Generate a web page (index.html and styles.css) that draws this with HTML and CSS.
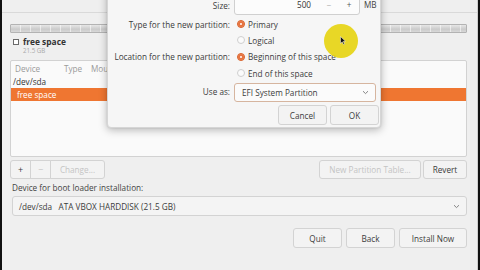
FILE: index.html
```html
<!DOCTYPE html>
<html>
<head>
<meta charset="utf-8">
<link rel="stylesheet" href="styles.css">
</head>
<body>
<div class="screen">
  <div class="window">
    <div class="topbar"></div>
    <div class="content">
      <div class="pbar"></div>
      <div class="legend">
        <span class="chk"></span>
        <div class="legend-text">
          <div class="legend-name">free space</div>
          <div class="legend-size">21.5 GB</div>
        </div>
      </div>
      <div class="listbox">
        <div class="lrow lhead">
          <span class="c-dev">Device</span><span class="c-type">Type</span><span class="c-mount">Mount point</span>
        </div>
        <div class="lrow"><span class="c-sda">/dev/sda</span></div>
        <div class="lrow lsel"><span class="c-free">free space</span></div>
      </div>
      <div class="toolbar">
        <div class="btn-group">
          <span class="btn tb-add">+</span><span class="btn tb-rm dis">−</span><span class="btn tb-change dis">Change...</span>
        </div>
        <div class="spacer"></div>
        <span class="btn tb-new dis">New Partition Table...</span>
        <span class="btn tb-revert">Revert</span>
      </div>
      <div class="boot-label">Device for boot loader installation:</div>
      <div class="combo boot-combo">
        <span class="combo-text">/dev/sda&nbsp;&nbsp;&nbsp;ATA VBOX HARDDISK (21.5 GB)</span>
        <svg class="chev" width="7" height="5" viewBox="0 0 7 5"><path d="M1 1.2 L3.5 3.6 L6 1.2" fill="none" stroke="#777" stroke-width="0.9"/></svg>
      </div>
      <div class="footer">
        <span class="btn fbtn f-quit">Quit</span>
        <span class="btn fbtn f-back">Back</span>
        <span class="btn fbtn f-install">Install Now</span>
      </div>
    </div>
  </div>

  <div class="dialog">
    <div class="dlabel">Size:</div>
    <div class="size-row">
      <div class="spin">
        <span class="spin-val">500</span>
        <span class="spin-btn minus">−</span>
        <span class="spin-btn plus">+</span>
      </div>
      <span class="unit">MB</span>
    </div>

    <div class="dlabel">Type for the new partition:</div>
    <div class="radio"><span class="rdot on"></span>Primary</div>
    <div class="dlabel"></div>
    <div class="radio"><span class="rdot"></span>Logical</div>

    <div class="dlabel">Location for the new partition:</div>
    <div class="radio"><span class="rdot on"></span>Beginning of this space</div>
    <div class="dlabel"></div>
    <div class="radio"><span class="rdot"></span>End of this space</div>

    <div class="dlabel">Use as:</div>
    <div class="combo use-combo">
      <span class="combo-text">EFI System Partition</span>
      <svg class="chev" width="7" height="5" viewBox="0 0 7 5"><path d="M1 1.2 L3.5 3.6 L6 1.2" fill="none" stroke="#777" stroke-width="0.9"/></svg>
    </div>

    <div class="dbuttons">
      <span class="btn dbtn">Cancel</span>
      <span class="btn dbtn">OK</span>
    </div>
  </div>

  <div class="highlight"></div>
  <svg class="cursor" width="6" height="9" viewBox="0 0 6 9"><path d="M0.5 0.5 L0.5 7.5 L2.2 5.9 L3.5 8.5 L4.6 8 L3.3 5.4 L5.5 5.3 Z" fill="#111" stroke="#fff" stroke-width="0.5"/></svg>
</div>
</body>
</html>
```
FILE: styles.css
```css
* { box-sizing: border-box; }
html, body { margin: 0; padding: 0; }
body {
  width: 480px; height: 270px; overflow: hidden;
  background: #111;
  font-family: "Open Sans", "Noto Sans", sans-serif;
  font-size: 8.2px;
  color: #3c3c3c;
}
.screen { position: relative; width: 480px; height: 270px; }
.window {
  margin-left: 2px; width: 476px; height: 270px;
  background: #efefef;
  border-right: 1px solid #cfcfcf;
}
.topbar {
  height: 13px;
  border-bottom: 1px solid #d9d9d9;
}
.content { padding: 11px 10px 0 8px; display: flex; flex-direction: column; }

.pbar {
  height: 9px;
  border: 1px solid #b3b3b3;
  border-radius: 1px;
  background:
    repeating-linear-gradient(90deg, transparent 0 9px, rgba(255,255,255,0.55) 9px 10px),
    linear-gradient(#e6e6e6, #cbcbcb 60%, #d8d8d8);
}
.legend { display: flex; align-items: flex-start; margin-top: 3px; height: 20px; }
.chk { width: 6px; height: 6px; border: 1px solid #6a6a6a; background: #fff; margin: 3px 4px 0 3px; flex: none; }
.legend-name { font-weight: bold; font-size: 8.4px; color: #333; line-height: 11px; }
.legend-size { font-size: 6.2px; color: #a9a9a9; line-height: 7px; }

.listbox {
  margin-top: 4px;
  height: 97px;
  border: 1px solid #d2d2d2;
  border-radius: 2px;
  background: #fafafa;
}
.lrow { height: 13px; display: flex; align-items: center; white-space: nowrap; }
.lhead { height: 14px; color: #9a9a9a; }
.c-dev { margin-left: 4px; width: 49px; }
.c-type { width: 27px; }
.c-sda { margin-left: 2px; color: #333; }
.lsel { background: #ef7631; color: #fff; }
.c-free { margin-left: 6px; }

.btn {
  display: inline-flex; align-items: center; justify-content: center;
  height: 19px;
  border: 1px solid #d3d3d3;
  border-radius: 3px;
  background: #f3f3f3;
  color: #3c3c3c;
  white-space: nowrap;
}
.dis { color: #c4c4c4; }
.toolbar { display: flex; margin-top: 3px; height: 19px; }
.btn-group { display: flex; }
.btn-group .btn { border-radius: 0; margin-left: -1px; }
.btn-group .btn:first-child { border-radius: 3px 0 0 3px; margin-left: 0; }
.btn-group .btn:last-child { border-radius: 0 3px 3px 0; }
.tb-add { width: 21px; font-size: 9px; }
.tb-rm { width: 21px; font-size: 9px; }
.tb-change { width: 55px; }
.spacer { flex: 1; }
.tb-new { width: 102px; margin-right: 2px; }
.tb-revert { width: 44px; }

.boot-label { margin-top: 3px; height: 12px; line-height: 12px; padding-left: 2px; color: #444; }
.combo {
  display: flex; align-items: center; justify-content: space-between;
  border: 1px solid #d3d3d3; border-radius: 3px; background: #f4f4f4;
}
.boot-combo { margin-top: 2px; height: 20px; margin-left: 2px; padding: 0 6px 0 6px; }
.combo-text { white-space: nowrap; color: #3c3c3c; }
.footer { display: flex; justify-content: flex-end; margin-top: 12px; gap: 4px; }
.fbtn { height: 20px; }
.f-quit { width: 49px; }
.f-back { width: 49px; }
.f-install { width: 68px; }

/* dialog */
.dialog {
  position: absolute; left: 107px; top: -14px;
  width: 274px; height: 142px;
  background: #f6f6f6;
  border: 1px solid #d6d6d6;
  border-radius: 0 0 4px 4px;
  box-shadow: 0 2px 8px rgba(0,0,0,0.28), 0 0 2px rgba(0,0,0,0.12);
  display: grid;
  grid-template-columns: 118px 1fr;
  column-gap: 4px;
  align-items: center;
  align-content: start;
  padding: 7px 1px 0 4px;
}
.dlabel { text-align: right; white-space: nowrap; color: #3c3c3c; }
.size-row { display: flex; align-items: center; height: 21px; margin-bottom: 1px; }
.spin {
  display: flex; align-items: center;
  width: 126px; height: 21px;
  border: 1px solid #d0d0d0; border-radius: 3px; background: #fcfcfc;
}
.spin-val { flex: 1; text-align: right; padding-right: 8px; color: #333; }
.spin-btn { width: 20px; text-align: center; font-size: 8.2px; color: #555; }
.spin-btn.minus { color: #aaa; }
.unit { margin-left: 4px; color: #444; }
.radio { display: flex; align-items: center; height: 16.3px; white-space: nowrap; color: #3c3c3c; }
.rdot {
  width: 8px; height: 8px; border-radius: 50%;
  border: 1px solid #cfcfcf; background: #fbfbfb;
  margin: 0 3px 0 3px; flex: none;
}
.rdot.on { background: #e8733e; border-color: #d9652f; box-shadow: inset 0 0 0 2px #e8733e, inset 0 0 0 3.2px #fff; }
.use-combo {
  height: 19px; margin-top: 2px; width: 142px;
  border-color: #d6b59f; background: #fbfbfb;
  padding: 0 6px 0 7px;
}
.dbuttons { grid-column: 1 / 3; display: flex; justify-content: flex-end; gap: 3px; margin-top: 3px; }
.dbtn { width: 49px; height: 20px; }

.highlight {
  position: absolute; left: 324px; top: 24px;
  width: 34px; height: 34px; border-radius: 50%;
  background: rgba(230, 212, 20, 0.92);
}
.cursor { position: absolute; left: 340px; top: 36px; }
```
